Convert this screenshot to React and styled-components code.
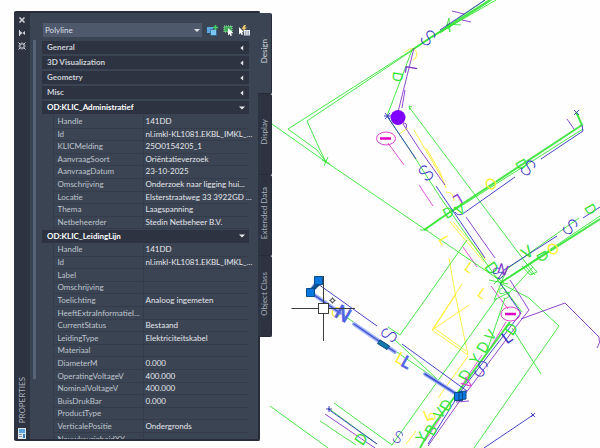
import { useState } from "react";
import styled, { createGlobalStyle, css } from "styled-components";

const GREEN = "#35e335";
const BLUE = "#3530c4";
const PURPLE = "#8434c8";
const MAGENTA = "#dd3fd0";
const YELLOW = "#ffee2e";

const collapsed = ["General", "3D Visualization", "Geometry", "Misc"];

const administratief = [
  ["Handle", "141DD"],
  ["Id", "nl.imkl-KL1081.EKBL_IMKL_..."],
  ["KLICMelding", "25O0154205_1"],
  ["AanvraagSoort", "Oriëntatieverzoek"],
  ["AanvraagDatum", "23-10-2025"],
  ["Omschrijving", "Onderzoek naar ligging hui..."],
  ["Locatie", "Elsterstraatweg 33 3922GD ..."],
  ["Thema", "Laagspanning"],
  ["Netbeheerder", "Stedin Netbeheer B.V."],
];

const leidinglijn = [
  ["Handle", "141DD"],
  ["Id", "nl.imkl-KL1081.EKBL_IMKL_..."],
  ["Label", ""],
  ["Omschrijving", ""],
  ["Toelichting", "Analoog ingemeten"],
  ["HeeftExtraInformatieI...", ""],
  ["CurrentStatus", "Bestaand"],
  ["LeidingType", "Elektriciteitskabel"],
  ["Materiaal", ""],
  ["DiameterM", "0.000"],
  ["OperatingVoltageV", "400.000"],
  ["NominalVoltageV", "400.000"],
  ["BuisDrukBar", "0.000"],
  ["ProductType", ""],
  ["VerticalePositie", "Ondergronds"],
  ["NauwkeurigheidXY", ""],
];

const tabs = ["Design", "Display", "Extended Data", "Object Class"];

// color, stroke width, path
const lines = [
  // gas
  [YELLOW, 1, "M453 298L432 330L468 355L456 298L449 258M432 330L469 305M453 298L462 284M468 356L438 398"],
  [YELLOW, 1, "M456 294L434 328L466 351M450 222L484 262M453 222L486 260M414 130L442 178M426 148L440 172L446 188M416 431L406 444"],
  [YELLOW, 1, "M405 52Q415 44 417 54Q416 60 413 60M446 192Q454 192 454 201M399 134L408 128"],
  // telecom
  [MAGENTA, 1, "M388 143L404 165M419 185L433 206M463 247L477 267M491 286L508 309M506 322L489 350M482 355L462 385M441 417L425 441"],
  // low voltage
  [GREEN, 1, "M440 32L288 129L317 150L326 162M413 50L307 121L320 150L326 162M272 124L326 162L498 279"],
  [GREEN, 1, "M412 50L387 116L410 150L440 197L500 283L522 312M412 107L409 106L410 110M409 107L535 275M424 230L440 219"],
  [GREEN, 1, "M467 240L425 300L400 335L388 327M500 283L529 298L559 326L474 448M600 216L500 283M533 267L510 292L494 300M579 218L507 269L494 300"],
  [GREEN, 1, "M497 298L392 445L334 403M505 298L487 351M512 328L541 374M270 406L328 448M320 421L356 445M328 408L377 444"],
  [GREEN, 1, "M526 267L533 275M530 264L537 272L530 275L522 266M310 292L459 395M395 340L437 379"],
  [GREEN, 2, "M412 50L430 38L490 0M424 230L450 212L582 125L576 112M600 219L500 283M510 322L430 430L420 448"],
  [GREEN, 1, "M430 38L496 0M435 35L485 0M440 33L492 0M450 213L545 153L583 129M446 28L449 18L450 32L447 24L461 25"],
  [GREEN, 1, "M322 160L330 164M328 157L324 166M420 230L428 230M495 276L504 283M503 276L494 284M489 280L508 284"],
  [PURPLE, 1, "M414 48L398 112M405 90L402 108M403 124L420 150L445 185M466 217L495 258M510 280L529 310L521 320L459 402L428 446"],
  [PURPLE, 1, "M452 11L464 14M462 20L471 22M567 119L574 129M521 319L565 303L599 337Q601 343 597 348M325 414L375 448M456 402L469 401"],
  [BLUE, 1, "M387 116L416 159M436 186L485 258M500 283L521 313L461 391L428 444M440 30L485 0"],
  [BLUE, 1, "M582 125L583 131L541 159M515 177L464 213Q458 217 455 212M600 207L583 218M557 236L504 270L498 279"],
  [BLUE, 1, "M318 284L377 326M402 344L467 391M484 448L533 415M328 409L377 444M384 116L391 116M385 113L390 119M390 113L385 119"],
  [BLUE, 1, "M531 413L535 417M535 413L531 417M574 110L579 115M579 110L574 115M326 409L332 409M329 406L329 412"],
];

// letter, x, y, angle, color, size
const marks = [
  ["D", 398, 77, 100, GREEN, 14],
  ["L", 411, 70, 100, PURPLE, 16],
  ["S", 428, 38, 40, BLUE, 21],
  ["O", 491, 184, -34, YELLOW, 15],
  ["D", 448, 212, -30, GREEN, 14],
  ["L", 458, 200, 150, PURPLE, 14],
  ["V", 460, 209, -30, GREEN, 14],
  ["D", 522, 164, 60, GREEN, 14],
  ["S", 528, 168, 40, BLUE, 21],
  ["S", 426, 173, -40, BLUE, 21],
  ["D", 591, 209, 60, GREEN, 14],
  ["S", 570, 227, 40, BLUE, 21],
  ["O", 553, 249, -34, YELLOW, 15],
  ["D", 543, 256, 60, GREEN, 14],
  ["V", 527, 252, -34, GREEN, 16],
  ["D", 492, 268, 55, GREEN, 16],
  ["S", 498, 273, -40, BLUE, 16],
  ["N", 503, 269, 20, PURPLE, 14],
  ["S", 504, 293, -40, GREEN, 16],
  ["L", 445, 240, 60, YELLOW, 14],
  ["L", 470, 267, 35, YELLOW, 14],
  ["L", 483, 293, 35, YELLOW, 14],
  ["L", 401, 358, 30, YELLOW, 16],
  ["O", 337, 312, 30, YELLOW, 14],
  ["L", 428, 415, -25, YELLOW, 15],
  ["O", 432, 416, -30, YELLOW, 10],
  ["S", 389, 335, -60, BLUE, 21],
  ["D", 361, 439, -55, GREEN, 15],
  ["D", 511, 329, -55, GREEN, 15],
  ["L", 507, 337, -35, BLUE, 16],
  ["V", 490, 335, -55, GREEN, 14],
  ["D", 483, 347, -60, GREEN, 15],
  ["Y", 475, 359, -55, GREEN, 14],
  ["S", 481, 369, 25, BLUE, 21],
  ["D", 465, 375, -60, GREEN, 15],
  ["V", 467, 383, -55, MAGENTA, 14],
  ["D", 446, 405, -60, GREEN, 15],
  ["V", 439, 413, -55, GREEN, 14],
  ["B", 431, 430, -60, GREEN, 15],
  ["Y", 421, 437, -55, GREEN, 14],
  ["S", 398, 437, 25, BLUE, 16],
];

const GlobalStyle = createGlobalStyle`
  * {
    box-sizing: border-box;
  }
  body {
    margin: 0;
    background: #fefefe;
    overflow: hidden;
    font-family: "Lato", "Open Sans", sans-serif;
  }
`;

const Workspace = styled.main`
  position: relative;
  min-height: 100vh;
  padding: 11px 0 7px 14px;
`;

const Canvas = styled.svg`
  position: absolute;
  inset: 0;
  width: 100%;
  height: 100%;
`;

const Mark = styled.text`
  font-family: "Inter", "Roboto", sans-serif;
  font-weight: ${(p) => (p.$light ? 200 : 400)};
  text-anchor: middle;
  dominant-baseline: central;
`;

const Palette = styled.section`
  position: relative;
  display: flex;
  align-items: flex-start;
  width: 43%;
  min-width: 258px;
  height: calc(100vh - 18px);
`;

const Frame = styled.div`
  flex: 1;
  min-width: 0;
  height: 100%;
  display: flex;
  background: #3b4453;
  border: solid #272c38;
  border-width: 2px 2px 2px 0;
  border-radius: 2px;
`;

const Rail = styled.div`
  width: 16px;
  display: flex;
  flex-direction: column;
  align-items: center;
  background: #2d3341;
`;

const RailButton = styled.button`
  display: grid;
  place-items: center;
  width: 16px;
  height: 13px;
  padding: 0;
  border: 0;
  background: none;
  color: #d3d7dd;
`;

const RailTitle = styled.h1`
  margin: auto 0 5px;
  writing-mode: vertical-rl;
  transform: rotate(180deg);
  font-size: 8px;
  line-height: 12px;
  font-weight: 400;
  color: #aeb4be;
`;

const Body = styled.div`
  flex: 1;
  min-width: 0;
  display: flex;
  flex-direction: column;
  padding: 10px 0 0 3px;
`;

const Toolbar = styled.div`
  display: flex;
  align-items: center;
  gap: 5px;
  padding: 0 8px 0 10px;
  height: 14px;
`;

const SelectWrap = styled.div`
  position: relative;
  flex: 1;
  display: flex;
  svg {
    position: absolute;
    right: 2px;
    top: 6px;
    pointer-events: none;
  }
`;

const TypeSelect = styled.select`
  appearance: none;
  width: 100%;
  height: 14px;
  padding: 0 2px;
  border: 0;
  border-radius: 0;
  background: #4e596c;
  color: #dcdfe4;
  font: 8px/14px "Lato", sans-serif;
`;

const ToolButton = styled.button`
  display: flex;
  padding: 0;
  border: 0;
  background: none;
`;

const Scroller = styled.div`
  flex: 1;
  min-height: 0;
  display: flex;
  gap: 6px;
  margin-top: 3px;
  padding-right: 9px;
  overflow: hidden;
`;

const Thumb = styled.div`
  width: 3px;
  height: 85%;
  background: #566275;
`;

const Groups = styled.div`
  flex: 1;
  min-width: 0;
`;

const ClosedGroups = styled.div`
  display: grid;
  gap: 2px;
  padding: 1px 0 2px;
`;

const GroupHeader = styled.button`
  display: flex;
  align-items: center;
  justify-content: space-between;
  width: 100%;
  height: 13px;
  padding: 0 4px 0 5px;
  border: 0;
  background: #2d3341;
  color: ${(p) => (p.$open ? "#fff" : "#ccd0d7")};
  font: 700 8px/13px "Lato", sans-serif;
`;

const Properties = styled.table`
  width: 100%;
  margin: 1px 0;
  border-collapse: collapse;
  table-layout: fixed;
  font-size: 8px;
  line-height: 11px;
  tr {
    height: 13px;
  }
  tr:nth-child(5n + 2),
  tr:nth-child(5n + 4) {
    height: 12px;
  }
`;

const cell = css`
  padding: 0 0 0 4px;
  border-bottom: 1px solid #343c4a;
  font-weight: 400;
  text-align: left;
  white-space: nowrap;
`;

const Gutter = styled.td`
  width: 11px;
  padding: 0;
  border-right: 1px solid #343c4a;
`;

const Name = styled.th`
  ${cell}
  width: 90px;
  color: #bfc5cd;
`;

const Value = styled.td`
  ${cell}
  padding-left: 2px;
  border-left: 1px solid #343c4a;
  color: #e4e7eb;
`;

const Tabs = styled.div`
  display: flex;
  flex-direction: column;
  width: 14px;
  margin: 2px 0 0 -2px;
  z-index: 1;
`;

const Tab = styled.button`
  height: 81px;
  padding: 0;
  border: 0;
  border-right: 1px solid #272c38;
  border-bottom: 1px solid #272c38;
  border-radius: 0 2px 2px 0;
  background: ${(p) => (p.$active ? "#3b4453" : "#2d3341")};
  color: ${(p) => (p.$active ? "#d0d4da" : "#a9afba")};
  font: 8px/13px "Lato", sans-serif;
  span {
    writing-mode: vertical-rl;
    transform: rotate(180deg);
  }
`;

function Caret({ open }) {
  return (
    <svg width="6" height="6" viewBox="0 0 6 6" fill="#e8eaee">
      <path d={open ? "M0 1.5h6L3 4.5z" : "M4.2 0.5v5L1.4 3z"} />
    </svg>
  );
}

function PropertyGroup({ title, rows }) {
  const [open, setOpen] = useState(true);
  return (
    <>
      <GroupHeader $open={open} onClick={() => setOpen(!open)}>
        {title}
        <Caret open={open} />
      </GroupHeader>
      {open && (
        <Properties aria-label={title}>
          <tbody>
            {rows.map(([name, value]) => (
              <tr key={name}>
                <Gutter />
                <Name scope="row">{name}</Name>
                <Value>{value}</Value>
              </tr>
            ))}
          </tbody>
        </Properties>
      )}
    </>
  );
}

function Drawing() {
  return (
    <Canvas viewBox="0 0 600 448" preserveAspectRatio="xMinYMin slice" fill="none">
      {lines.map(([color, width, d]) => (
        <path key={d} d={d} stroke={color} strokeWidth={width} strokeOpacity="0.9" />
      ))}
      {marks.map(([letter, x, y, angle, color, size]) => (
        <Mark
          key={`${x}-${y}`}
          $light={letter === "S"}
          transform={`translate(${x} ${y}) rotate(${angle})`}
          fill={color}
          fontSize={size}
        >
          {letter}
        </Mark>
      ))}

      <g stroke="#e03ad2">
        <ellipse cx="386" cy="138.500" rx="9.500" ry="6.500" />
        <ellipse cx="510.500" cy="314" rx="9.500" ry="7" />
        <path d="M380 138.500h11M505 314h11" stroke="#e000c4" strokeWidth="2.500" />
      </g>
      <circle cx="398" cy="117.500" r="7.500" fill="#7f00ff" />
      <path d="M403 123q5 0 3 5" stroke={PURPLE} />

      {/* selected cable */}
      <g strokeLinecap="round">
        <path d="M316 283L310 292L340 313M354 324L395 352M425 374L458 395" stroke="#a3b5f7" strokeWidth="4" />
        <path d="M316 283L310 292L340 313M354 324L395 352M425 374L458 395" stroke="#3f52d2" strokeWidth="1.500" />
        <path d="M318 284L311 291" stroke="#0b4f8f" strokeWidth="4" />
      </g>
      <Mark transform="translate(343 314) rotate(30)" fill="#4456dc" stroke="#5a6be8" fontSize="19">N</Mark>
      <Mark transform="translate(407 362) rotate(30)" fill="#4456dc" stroke="#5a6be8" fontSize="16">L</Mark>
      <g fill="#0a78e0" stroke="#0b4a86">
        <path d="M314.500 276.500h8v8h-8zM306.500 288.500h8v8h-8z" />
        <path d="M459 391.500l7-0.500v8l-7 1zM454.500 392.500l8 0v8l-8 0z" />
        <path d="M380 340l9.500 6l-2.500 3.500l-9.500-6z" fill="#1479a8" />
      </g>
      <g stroke="#3c3c3c">
        <path d="M291.500 308.500H318M329 308.500H355M323.500 276V303M323.500 314V341" />
        <rect x="318.500" y="303.500" width="10" height="10" fill="#fff" />
      </g>
      <g stroke="#222">
        <circle cx="332.500" cy="300.500" r="1.800" fill="#fff" />
        <path d="M332.500 297.500v1M332.500 302.500v1M329.500 300.500h1M334.500 300.500h1" />
      </g>
    </Canvas>
  );
}

export default function App() {
  const [tab, setTab] = useState("Design");

  return (
    <Workspace>
      <GlobalStyle />
      <Drawing />
      <Palette>
        <Frame>
          <Rail>
            <RailButton aria-label="Close">
              <svg width="8" height="8" viewBox="0 0 8 8" stroke="currentColor" strokeWidth="1.500">
                <path d="M1.500 1.500l5 5M6.500 1.500l-5 5" />
              </svg>
            </RailButton>
            <RailButton aria-label="Auto-hide">
              <svg width="8" height="8" viewBox="0 0 8 8" fill="currentColor">
                <path d="M1 1h1v6H1zM2 2l2.500 2L2 6zM7 2v4L4.500 4z" />
              </svg>
            </RailButton>
            <RailButton aria-label="Settings">
              <svg width="8" height="8" viewBox="0 0 8 8" fill="none" stroke="currentColor">
                <rect x="2" y="2" width="4" height="4" />
                <path d="M0.500 0.500L2 2M7.500 0.500L6 2M0.500 7.500L2 6M7.500 7.500L6 6M4 0.500v1M4 6.500v1M0.500 4h1M6.500 4h1" />
              </svg>
            </RailButton>
            <RailTitle>PROPERTIES</RailTitle>
            <svg width="8" height="11" viewBox="0 0 8 11">
              <rect width="8" height="11" fill="#dce6ee" />
              <path d="M1 1h6v4H1z" fill="#5aa6dc" />
              <path d="M1 6.500h3M1 8.500h3" stroke="#8497a8" />
              <path d="M5 6h2v4H5z" fill="#3a80b8" />
            </svg>
          </Rail>

          <Body>
            <Toolbar>
              <SelectWrap>
                <TypeSelect aria-label="Object type" defaultValue="Polyline">
                  <option>Polyline</option>
                </TypeSelect>
                <svg width="6" height="3" viewBox="0 0 6 3" fill="#e0e3e8">
                  <path d="M0 0h6L3 3z" />
                </svg>
              </SelectWrap>
              <ToolButton aria-label="Toggle PICKADD">
                <svg width="11" height="11" viewBox="0 0 11 11">
                  <path d="M0 2h6v6H0z" fill="#5aa9de" />
                  <path d="M3.500 4.500h6v6h-6z" fill="#7cc4f2" stroke="#2e5f8a" strokeWidth="0.700" />
                  <path d="M8.500 0v5M6 2.500h5" stroke="#43cf62" strokeWidth="1.500" />
                </svg>
              </ToolButton>
              <ToolButton aria-label="Select Objects">
                <svg width="11" height="11" viewBox="0 0 11 11">
                  <path d="M1 1h8v6H1z" fill="#3fae5a" stroke="#a6e3b2" strokeDasharray="1 1" />
                  <path d="M5 3v7.500l1.600-1.500l1 2l1.400-0.600l-1-2.200h2.500z" fill="#fff" />
                </svg>
              </ToolButton>
              <ToolButton aria-label="Quick Select">
                <svg width="11" height="11" viewBox="0 0 11 11">
                  <path d="M5 0L2.500 4h2L3 7l5-4.500H6L7 0z" fill="#e9c46a" />
                  <path d="M0 2v7.500l1.600-1.500l1 2l1.400-0.600l-1-2.200h2z" fill="#fff" />
                  <path d="M5 5h6v5.500H5z" fill="#dfe5ec" />
                  <path d="M6 7h4M6 9h4" stroke="#5d6b7c" strokeWidth="0.800" strokeDasharray="1 0.500" />
                </svg>
              </ToolButton>
            </Toolbar>

            <Scroller>
              <Thumb />
              <Groups>
                <ClosedGroups>
                  {collapsed.map((title) => (
                    <GroupHeader key={title}>
                      {title}
                      <Caret />
                    </GroupHeader>
                  ))}
                </ClosedGroups>
                <PropertyGroup title="OD:KLIC_Administratief" rows={administratief} />
                <PropertyGroup title="OD:KLIC_LeidingLijn" rows={leidinglijn} />
              </Groups>
            </Scroller>
          </Body>
        </Frame>

        <Tabs role="tablist">
          {tabs.map((name) => (
            <Tab
              key={name}
              role="tab"
              aria-selected={tab === name}
              $active={tab === name}
              onClick={() => setTab(name)}
            >
              <span>{name}</span>
            </Tab>
          ))}
        </Tabs>
      </Palette>
    </Workspace>
  );
}
